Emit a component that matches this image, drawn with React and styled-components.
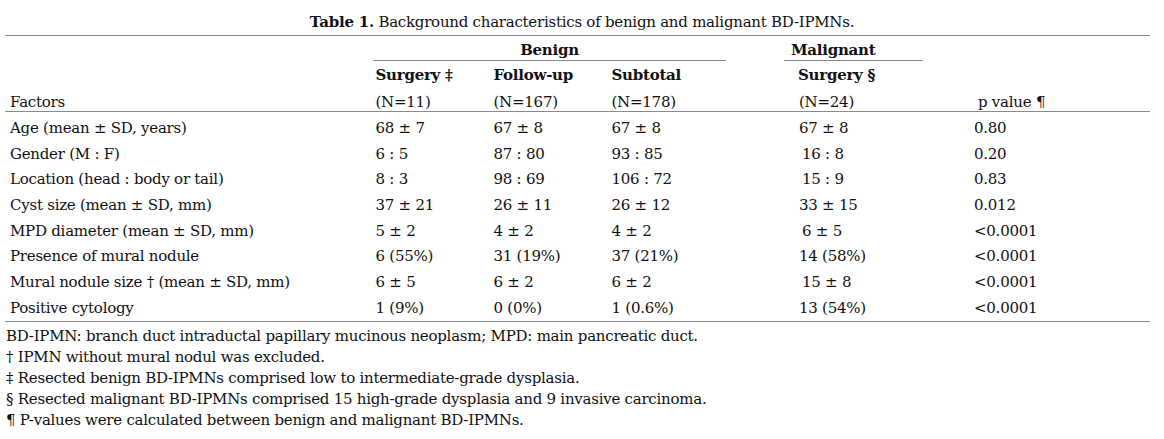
import React from 'react';
import styled, { createGlobalStyle } from 'styled-components';

const GlobalStyle = createGlobalStyle`
  html, body {
    margin: 0;
    padding: 0;
    background: #fff;
  }
  body {
    font-family: "DejaVu Serif", "Liberation Serif", serif;
    font-size: 15px;
    letter-spacing: -0.25px;
    color: #111;
  }
`;

// column widths: factors | surgery | follow-up | subtotal | gap | malignant | p value
const COLS = '368px 118px 118px 117px 58px 139px 1fr';
const RULE = '#8a8a8a';

const rows = [
  ['Age (mean ± SD, years)', '68 ± 7', '67 ± 8', '67 ± 8', '67 ± 8', '0.80'],
  ['Gender (M : F)', '6 : 5', '87 : 80', '93 : 85', '16 : 8', '0.20', true],
  ['Location (head : body or tail)', '8 : 3', '98 : 69', '106 : 72', '15 : 9', '0.83', true],
  ['Cyst size (mean ± SD, mm)', '37 ± 21', '26 ± 11', '26 ± 12', '33 ± 15', '0.012'],
  ['MPD diameter (mean ± SD, mm)', '5 ± 2', '4 ± 2', '4 ± 2', '6 ± 5', '<0.0001', true],
  ['Presence of mural nodule', '6 (55%)', '31 (19%)', '37 (21%)', '14 (58%)', '<0.0001'],
  ['Mural nodule size † (mean ± SD, mm)', '6 ± 5', '6 ± 2', '6 ± 2', '15 ± 8', '<0.0001', true],
  ['Positive cytology', '1 (9%)', '0 (0%)', '1 (0.6%)', '13 (54%)', '<0.0001'],
];

const notes = [
  'BD-IPMN: branch duct intraductal papillary mucinous neoplasm; MPD: main pancreatic duct.',
  '† IPMN without mural nodul was excluded.',
  '‡ Resected benign BD-IPMNs comprised low to intermediate-grade dysplasia.',
  '§ Resected malignant BD-IPMNs comprised 15 high-grade dysplasia and 9 invasive carcinoma.',
  '¶ P-values were calculated between benign and malignant BD-IPMNs.',
];

const App = () => {
  return (
    <>
      <GlobalStyle />
      <Page>
        <Caption>
          <strong>Table 1.</strong> Background characteristics of benign and malignant BD-IPMNs.
        </Caption>
        <Table>
          <Head>
            <HeadCell $col="2 / span 3" $row={1} $center $rule $bold>Benign</HeadCell>
            <HeadCell $col="6" $row={1} $pad={7} $rule $bold>Malignant</HeadCell>

            <HeadCell $col="2" $row={2} $bold>Surgery ‡</HeadCell>
            <HeadCell $col="3" $row={2} $bold>Follow-up</HeadCell>
            <HeadCell $col="4" $row={2} $bold>Subtotal</HeadCell>
            <HeadCell $col="6" $row={2} $pad={14} $bold>Surgery §</HeadCell>

            <HeadCell $col="1" $row={3} $pad={5}>Factors</HeadCell>
            <HeadCell $col="2" $row={3}>(N=11)</HeadCell>
            <HeadCell $col="3" $row={3}>(N=167)</HeadCell>
            <HeadCell $col="4" $row={3}>(N=178)</HeadCell>
            <HeadCell $col="6" $row={3} $pad={15}>(N=24)</HeadCell>
            <HeadCell $col="7" $row={3} $pad={55}>p value ¶</HeadCell>
          </Head>
          <Body>
            {rows.map(([factor, surgery, follow, subtotal, malignant, p, shifted]) => (
              <Row key={factor}>
                <Cell>{factor}</Cell>
                <Cell>{surgery}</Cell>
                <Cell>{follow}</Cell>
                <Cell>{subtotal}</Cell>
                <Cell />
                <Cell $shift={shifted ? 3 : 0}>{malignant}</Cell>
                <Cell>{p}</Cell>
              </Row>
            ))}
          </Body>
        </Table>
        <Notes>
          {notes.map((n) => (
            <Note key={n}>{n}</Note>
          ))}
        </Notes>
      </Page>
    </>
  );
};

const Page = styled.div`
  width: 1164px;
  padding-top: 12px;
`;

const Caption = styled.div`
  text-align: center;
  line-height: 21px;
  white-space: nowrap;

  strong {
    font-weight: bold;
  }
`;

const Table = styled.div`
  margin: 2px 14px 0 5px;
  border-top: 1px solid ${RULE};
  border-bottom: 1px solid ${RULE};
`;

const Head = styled.div`
  display: grid;
  grid-template-columns: ${COLS};
  grid-template-rows: 25px 26px 24px;
  border-bottom: 1px solid ${RULE};
`;

const HeadCell = styled.div`
  grid-column: ${(p) => p.$col};
  grid-row: ${(p) => p.$row};
  box-sizing: border-box;
  padding-top: ${(p) => (p.$row === 3 ? 6 : 5)}px;
  padding-left: ${(p) => (p.$center ? 0 : p.$pad ?? 2.5)}px;
  text-align: ${(p) => (p.$center ? 'center' : 'left')};
  font-weight: ${(p) => (p.$bold ? 'bold' : 'normal')};
  border-bottom: ${(p) => (p.$rule ? `1px solid ${RULE}` : 'none')};
  white-space: nowrap;
`;

const Body = styled.div`
  padding-bottom: 3.4px;
`;

const Row = styled.div`
  display: grid;
  grid-template-columns: ${COLS};
  height: 25.7px;

  & > :nth-child(1) {
    padding-left: 5px;
  }
  & > :nth-child(2),
  & > :nth-child(3),
  & > :nth-child(4) {
    padding-left: 2.5px;
  }
  & > :nth-child(7) {
    padding-left: 51px;
  }
`;

const Cell = styled.div`
  padding-top: 8px;
  line-height: 17.7px;
  white-space: nowrap;

  &:nth-child(6) {
    padding-left: ${(p) => 15 + (p.$shift || 0)}px;
  }
`;

const Notes = styled.div`
  margin-left: 6px;
  padding-top: 4.3px;
`;

const Note = styled.div`
  line-height: 21px;
  white-space: nowrap;
`;

export default App;
